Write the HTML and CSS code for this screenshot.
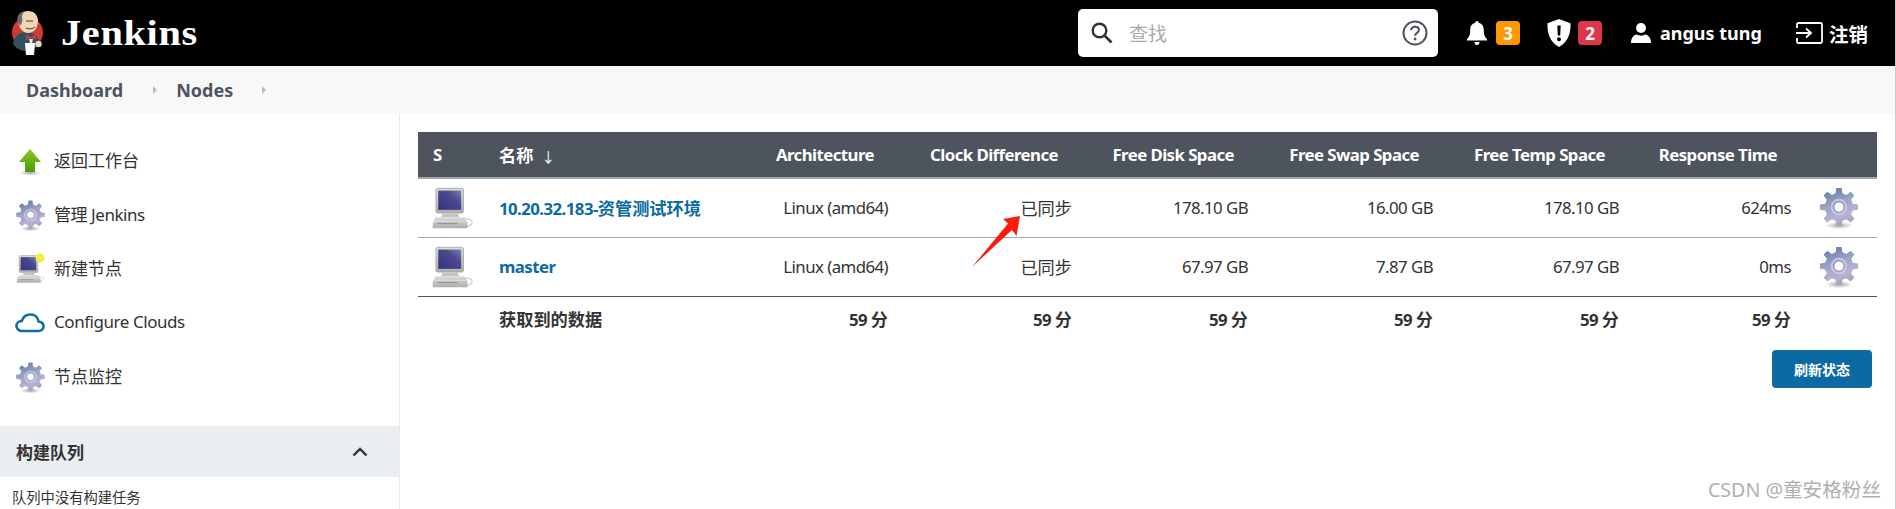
FILE: index.html
```html
<!DOCTYPE html>
<html lang="zh">
<head>
<meta charset="utf-8">
<title>Nodes - Jenkins</title>
<link rel="stylesheet" href="styles.css">
</head>
<body>
<svg class="defs" width="0" height="0" aria-hidden="true">
  <defs>
    <linearGradient id="gearFill" x1="0.25" y1="0" x2="0.65" y2="1">
      <stop offset="0" stop-color="#6478a8"/>
      <stop offset="0.4" stop-color="#9aa3c8"/>
      <stop offset="0.75" stop-color="#b9b2d2"/>
      <stop offset="1" stop-color="#a39fb8"/>
    </linearGradient>
    <linearGradient id="screenFill" x1="0" y1="1" x2="1" y2="0">
      <stop offset="0" stop-color="#35327c"/>
      <stop offset="0.65" stop-color="#4b4b90"/>
      <stop offset="1" stop-color="#7f7fae"/>
    </linearGradient>
    <linearGradient id="caseFill" x1="0" y1="0" x2="0" y2="1">
      <stop offset="0" stop-color="#dcdcda"/>
      <stop offset="1" stop-color="#aeaeaa"/>
    </linearGradient>
    <linearGradient id="arrowFill" x1="0" y1="0" x2="0" y2="1">
      <stop offset="0" stop-color="#8ac926"/>
      <stop offset="1" stop-color="#4e9a06"/>
    </linearGradient>
    <radialGradient id="shade" cx="0.5" cy="0.5" r="0.5">
      <stop offset="0" stop-color="#000" stop-opacity="0.35"/>
      <stop offset="1" stop-color="#000" stop-opacity="0"/>
    </radialGradient>
    <symbol id="gear" viewBox="0 0 48 48">
      <ellipse cx="24" cy="43" rx="15" ry="4" fill="url(#shade)"/>
      <path fill="url(#gearFill)" d="M20.25 7.96L21.08 2.2H26.92L27.75 7.96L31.98 9.72L36.64 6.22L40.78 10.36L37.28 15.02L39.04 19.25L44.8 20.08V25.92L39.04 26.75L37.28 30.98L40.78 35.64L36.64 39.78L31.98 36.28L27.75 38.04L26.92 43.8H21.08L20.25 38.04L16.02 36.28L11.36 39.78L7.22 35.64L10.72 30.98L8.96 26.75L3.2 25.92V20.08L8.96 19.25L10.72 15.02L7.22 10.36L11.36 6.22L16.02 9.72Z"/>
      <circle cx="24" cy="23" r="8" fill="none" stroke="#d9d6ea" stroke-width="2" opacity="0.7"/>
      <circle cx="24" cy="23" r="5.500" fill="#fff" stroke="#8a8fb5" stroke-width="1"/>
    </symbol>
    <symbol id="computer" viewBox="0 0 48 48">
      <path d="M38 36c5 0 8 1.500 8 3.500S43 44 40 44" fill="none" stroke="#c8c8c4" stroke-width="1.200"/>
      <rect x="6.500" y="2.500" width="30" height="27" rx="2" fill="url(#caseFill)" stroke="#a8a8a4" stroke-width="1"/>
      <rect x="9" y="5" width="25" height="21" fill="url(#screenFill)"/>
      <path d="M14 30h16l2 4H12z" fill="#c4c4c0"/>
      <path d="M6 34h32l3 6v6H3v-6z" fill="url(#caseFill)"/>
      <path d="M8 41h22" stroke="#8e8e88" stroke-width="1"/>
      <path d="M5 38.500h34" stroke="#e6e6e3" stroke-width="0.800"/>
    </symbol>
  </defs>
</svg>

<header class="topbar">
  <a class="brand" href="#">
    <svg class="logo" viewBox="0 0 34 46" aria-hidden="true">
      <circle cx="16.500" cy="22.500" r="15.500" fill="#d33833"/>
      <path d="M2 34c1-8 6-12 13-12s12 4 14 11c-3 5-8 8-14 8-6 0-10-3-13-7z" fill="#335061"/>
      <path d="M7 12C6 5 11 1 17 1s10 4 10 10c0 7-4 12-10 12-5 0-9-5-10-11z" fill="#f0d6b7"/>
      <path d="M7 13C5 7 8 2 13 1.500c-2 3-2.500 6-1.500 9L9.500 16z" fill="#6d6b6d"/>
      <path d="M15 25l5 2 5-2.500v5l-5-1.500-5 2z" fill="#d33833"/>
      <path d="M15 11h7M15 18c3 1.500 7 1 9-1" fill="none" stroke="#49342a" stroke-width="1"/>
      <path d="M18 29h4l-1 4h-2z" fill="#e8e8e8"/>
      <path d="M14 33h10l-1 12h-8z" fill="#fff"/>
      <circle cx="27.500" cy="34" r="3.200" fill="#f0d6b7"/>
    </svg>
    <span class="brand-name">Jenkins</span>
  </a>
  <div class="search">
    <svg class="search-icon" viewBox="0 0 22 22" aria-hidden="true">
      <circle cx="8.500" cy="8.500" r="6.800" fill="none" stroke="#333" stroke-width="2.400"/>
      <path d="M13.500 13.500l7 7" stroke="#333" stroke-width="2.600"/>
    </svg>
    <span class="search-text">查找</span>
    <svg class="help-icon" viewBox="0 0 26 26" aria-hidden="true">
      <circle cx="13" cy="13" r="11.500" fill="none" stroke="#4d545d" stroke-width="2"/>
      <path d="M9.200 10.200c0-2.300 1.700-3.500 3.900-3.500s3.800 1.300 3.800 3.200c0 3-3.800 2.900-3.800 5.800" fill="none" stroke="#4d545d" stroke-width="2"/>
      <circle cx="13.100" cy="19" r="1.400" fill="#4d545d"/>
    </svg>
  </div>
  <div class="tool tool-bell">
    <svg class="bell" viewBox="0 0 20 24" aria-hidden="true">
      <path d="M10 0c1 0 1.700.7 1.700 1.800 3.500.8 5.100 3.700 5.100 7.200 0 5 1 7 3.200 9v1.500H0V18c2.200-2 3.200-4 3.200-9 0-3.500 1.600-6.400 5.100-7.200C8.300.7 9 0 10 0z" fill="#fff"/>
      <path d="M7.500 21h5c0 1.700-1 3-2.500 3s-2.500-1.300-2.500-3z" fill="#fff"/>
    </svg>
    <span class="badge badge-orange">3</span>
  </div>
  <div class="tool tool-shield">
    <svg class="shield" viewBox="0 0 24 28" aria-hidden="true">
      <path fill-rule="evenodd" fill="#fff" d="M12 0l11.500 4.300c.5 10-2.500 18.700-11.500 23.700C3 23 0 14.300.5 4.300zM10.300 6.500l.5 10h2.400l.5-10zM12 18.200a2 2 0 1 0 0 4 2 2 0 0 0 0-4z"/>
    </svg>
    <span class="badge badge-red">2</span>
  </div>
  <div class="tool tool-user">
    <svg class="person" viewBox="0 0 20 20" aria-hidden="true">
      <circle cx="10" cy="5" r="5" fill="#fff"/>
      <path d="M0 20c0-5.500 3-8 5.500-8.500 3 1.500 6 1.500 9 0C17 12 20 14.500 20 20z" fill="#fff"/>
    </svg>
    <span class="user-name">angus tung</span>
  </div>
  <div class="tool tool-logout">
    <svg class="logout" viewBox="0 0 27 22" aria-hidden="true">
      <path d="M1 6V2.500C1 1.500 1.500 1 2.500 1h22c1 0 1.500.5 1.500 1.500v17c0 1-.5 1.500-1.500 1.500h-22c-1 0-1.500-.5-1.500-1.500V16" fill="none" stroke="#fff" stroke-width="1.800"/>
      <path d="M0 11h14M10 6.500l5 4.500-5 4.500" fill="none" stroke="#fff" stroke-width="1.800"/>
    </svg>
    <span class="logout-text">注销</span>
  </div>
</header>

<nav class="crumbs">
  <a class="crumb" href="#">Dashboard</a>
  <span class="crumb-sep"></span>
  <a class="crumb" href="#">Nodes</a>
  <span class="crumb-sep"></span>
</nav>

<div class="page">
  <aside class="side">
    <ul class="tasks">
      <li class="task">
        <svg class="task-icon" viewBox="0 0 30 30" aria-hidden="true">
          <ellipse cx="15" cy="27" rx="11" ry="2.500" fill="url(#shade)"/>
          <path d="M15 3l11 13h-6v10H10V16H4z" fill="url(#arrowFill)"/>
        </svg>
        <span>返回工作台</span>
      </li>
      <li class="task">
        <svg class="task-icon task-gear" aria-hidden="true"><use href="#gear"/></svg>
        <span class="latin">管理 Jenkins</span>
      </li>
      <li class="task">
        <svg class="task-icon" aria-hidden="true"><use href="#computer"/></svg>
        <svg class="task-star" viewBox="0 0 10 10" aria-hidden="true"><circle cx="5" cy="5" r="4.500" fill="#f6ee3c"/></svg>
        <span>新建节点</span>
      </li>
      <li class="task">
        <svg class="task-icon" viewBox="0 0 30 20" aria-hidden="true">
          <path d="M7.500 18C3.500 18 1.500 15.500 1.500 13c0-3 2.200-5 5.200-5C8 4 11.500 1.500 15.500 1.500c4.500 0 7.500 3 8 7 2.700.3 5 2 5 4.800 0 2.700-2 4.700-5 4.700z" fill="none" stroke="#0f6ea3" stroke-width="2.600"/>
        </svg>
        <span class="latin">Configure Clouds</span>
      </li>
      <li class="task">
        <svg class="task-icon task-gear" aria-hidden="true"><use href="#gear"/></svg>
        <span>节点监控</span>
      </li>
    </ul>
    <section class="queue">
      <div class="queue-head">
        <span>构建队列</span>
        <svg class="chevron" viewBox="0 0 16 10" aria-hidden="true"><path d="M1.500 8.500L8 2l6.500 6.500" fill="none" stroke="#333" stroke-width="2.400"/></svg>
      </div>
      <p class="queue-empty">队列中没有构建任务</p>
    </section>
  </aside>

  <main class="main">
    <table class="nodes">
      <colgroup>
        <col class="c-s"><col class="c-name"><col class="c-arch"><col class="c-clock"><col class="c-disk"><col class="c-swap"><col class="c-temp"><col class="c-resp"><col class="c-act">
      </colgroup>
      <thead>
        <tr>
          <th class="left">S</th>
          <th class="left"><span class="zh">名称</span> <span class="sort">↓</span></th>
          <th>Architecture</th>
          <th>Clock Difference</th>
          <th>Free Disk Space</th>
          <th>Free Swap Space</th>
          <th>Free Temp Space</th>
          <th>Response Time</th>
          <th></th>
        </tr>
      </thead>
      <tbody>
        <tr>
          <td class="icon-cell"><svg class="pc" aria-hidden="true"><use href="#computer"/></svg></td>
          <td class="left"><a class="node-link" href="#">10.20.32.183-<span class="zh">资管测试环境</span></a></td>
          <td>Linux (amd64)</td>
          <td><span class="zh">已同步</span></td>
          <td>178.10 GB</td>
          <td>16.00 GB</td>
          <td>178.10 GB</td>
          <td>624ms</td>
          <td class="icon-cell"><svg class="cog" aria-hidden="true"><use href="#gear"/></svg></td>
        </tr>
        <tr>
          <td class="icon-cell"><svg class="pc" aria-hidden="true"><use href="#computer"/></svg></td>
          <td class="left"><a class="node-link" href="#">master</a></td>
          <td>Linux (amd64)</td>
          <td><span class="zh">已同步</span></td>
          <td>67.97 GB</td>
          <td>7.87 GB</td>
          <td>67.97 GB</td>
          <td>0ms</td>
          <td class="icon-cell"><svg class="cog" aria-hidden="true"><use href="#gear"/></svg></td>
        </tr>
      </tbody>
      <tfoot>
        <tr>
          <td></td>
          <td class="left"><span class="zh">获取到的数据</span></td>
          <td>59 <span class="zh">分</span></td>
          <td>59 <span class="zh">分</span></td>
          <td>59 <span class="zh">分</span></td>
          <td>59 <span class="zh">分</span></td>
          <td>59 <span class="zh">分</span></td>
          <td>59 <span class="zh">分</span></td>
          <td></td>
        </tr>
      </tfoot>
    </table>
    <div class="actions"><button class="refresh" type="button">刷新状态</button></div>
  </main>
</div>

<svg class="annot" viewBox="0 0 50 54" aria-hidden="true">
  <path d="M49 1L32 4l5 4.500L1 52l40-37 4.500 6z" fill="#fb1c10"/>
</svg>
<div class="watermark">CSDN @童安格粉丝</div>
</body>
</html>
```
FILE: styles.css
```css
* { box-sizing: border-box; }
html, body { margin: 0; padding: 0; height: 100%; }
body {
  position: relative;
  height: 509px;
  overflow: hidden;
  background: #fff;
  color: #333;
  font-family: "Noto Sans", "Noto Sans CJK SC", sans-serif;
  font-size: 16px;
  border-right: 1px solid #ccc;
}
a { color: inherit; text-decoration: none; }
.defs { position: absolute; }

.topbar {
  display: flex;
  align-items: center;
  height: 66px;
  margin-right: -1px;
  background: #000;
  color: #fff;
  padding-left: 11px;
}
.brand { display: flex; align-items: center; width: 1067px; }
.logo { width: 34px; height: 46px; flex: none; }
.brand-name {
  display: inline-block;
  margin-left: 16px;
  font-family: "Liberation Serif", serif;
  font-weight: 700;
  font-size: 36px;
  letter-spacing: 0.600px;
  line-height: 1;
  transform: scaleX(1.120);
  transform-origin: left center;
}
.search {
  display: flex;
  align-items: center;
  width: 360px;
  height: 48px;
  margin-top: -1px;
  padding: 0 10px 0 13px;
  background: #fff;
  border-radius: 5px;
}
.search-icon { width: 22px; height: 22px; flex: none; }
.search-text { margin-left: 16px; flex: 1; color: #aaa; font-size: 19px; }
.help-icon { width: 26px; height: 26px; flex: none; }
.tool { display: flex; align-items: center; }
.tool-bell { margin-left: 29px; }
.bell { width: 20px; height: 24px; }
.badge {
  display: flex;
  align-items: center;
  justify-content: center;
  width: 24px;
  height: 24px;
  margin-left: 9px;
  border-radius: 4px;
  color: #fff;
  font-weight: 700;
  font-size: 17px;
}
.badge-orange { background: #ff9800; }
.badge-red { background: #e0364c; margin-left: 7px; }
.tool-shield { margin-left: 27px; }
.shield { width: 24px; height: 28px; }
.tool-user { margin-left: 29px; }
.person { width: 20px; height: 20px; }
.user-name { margin-left: 9px; font-weight: 700; font-size: 18px; }
.tool-logout { margin-left: 34px; }
.logout { width: 27px; height: 22px; }
.logout-text { margin-left: 6px; font-weight: 700; font-size: 19.500px; }

.crumbs {
  display: flex;
  align-items: center;
  height: 48px;
  padding-left: 26px;
  background: #f8f8f8;
  color: #4d545d;
  font-weight: 700;
  font-size: 18px;
}
.crumb-sep {
  width: 0;
  height: 0;
  margin: 0 19px 0 30px;
  border-left: 4px solid #bbb;
  border-top: 4px solid transparent;
  border-bottom: 4px solid transparent;
}
.crumb-sep:last-child { margin-left: 29px; }

.page { display: flex; height: 395px; }
.side { width: 400px; flex: none; border-right: 1px solid #e9e9e9; }
.tasks { list-style: none; margin: 0; padding: 20px 0 0; }
.task {
  position: relative;
  display: flex;
  align-items: center;
  gap: 9px;
  height: 54px;
  padding-left: 15px;
  font-size: 17px;
}
.task > span { margin-bottom: 3px; }
.task > .latin { letter-spacing: -0.450px; }
.task-icon { width: 30px; height: 30px; flex: none; }
.task-gear { width: 33px; height: 33px; margin: 0 -1.500px; }
.task-star { position: absolute; left: 35px; top: 11px; width: 10px; height: 10px; }
.queue { margin-top: 22px; }
.queue-head {
  display: flex;
  align-items: center;
  justify-content: space-between;
  height: 51px;
  padding: 0 31px 0 16px;
  background: #e9eef1;
  font-weight: 700;
  font-size: 17px;
}
.chevron { width: 16px; height: 10px; }
.queue-empty { margin: 10px 0 0 12px; font-size: 14.300px; line-height: 22px; }

.main { flex: 1; padding: 18px 18px 0; }
.nodes {
  width: 100%;
  table-layout: fixed;
  border-collapse: collapse;
  font-size: 16.800px;
  letter-spacing: -0.550px;
}
.zh { font-size: 17.200px; letter-spacing: 0; }
.c-s { width: 68px; }
.c-name { width: 256px; }
.c-arch { width: 159px; }
.c-clock { width: 184px; }
.c-disk { width: 176px; }
.c-swap { width: 185px; }
.c-temp { width: 186px; }
.c-resp { width: 172px; }
.c-act { width: 73px; }
.nodes th {
  height: 46px;
  padding: 0 27px 0 13px;
  background: #4d545d;
  color: #fff;
  font-weight: 700;
  text-align: right;
  white-space: nowrap;
  border-bottom: 2px solid #9ba7af;
}
.nodes th.left { text-align: left; padding-left: 13px; padding-right: 0; }
.nodes th:first-child { padding-left: 15px; }
.sort { margin-left: 4px; font-weight: 400; font-size: 14px; }
.nodes td {
  padding: 0 13px;
  text-align: right;
  white-space: nowrap;
}
.nodes tbody tr { height: 59px; }
.nodes tbody td { border-bottom: 1px solid #9ba7af; }
.nodes tbody tr:last-child td { border-bottom-color: #4d545d; }
.nodes tfoot td { height: 45px; font-weight: 700; }
.nodes td.left { text-align: left; }
.nodes td.icon-cell { padding: 0; text-align: center; }
.node-link { color: #0b6aa2; font-weight: 700; }
.pc { display: block; width: 44px; height: 44px; margin-left: 12px; }
.cog { display: block; width: 44px; height: 44px; margin-left: 13px; }
.actions { display: flex; justify-content: flex-end; padding: 9px 5px 0 0; }
.refresh {
  width: 100px;
  height: 38px;
  padding: 0;
  border: 0;
  border-radius: 4px;
  background: #0b6aa2;
  color: #fff;
  font-family: inherit;
  font-size: 14px;
  font-weight: 700;
}

.annot { position: absolute; left: 971px; top: 215px; width: 50px; height: 54px; }
.watermark {
  position: absolute;
  right: 14px;
  top: 478px;
  color: #b0b0b0;
  font-size: 19.600px;
  line-height: 24px;
}
```
